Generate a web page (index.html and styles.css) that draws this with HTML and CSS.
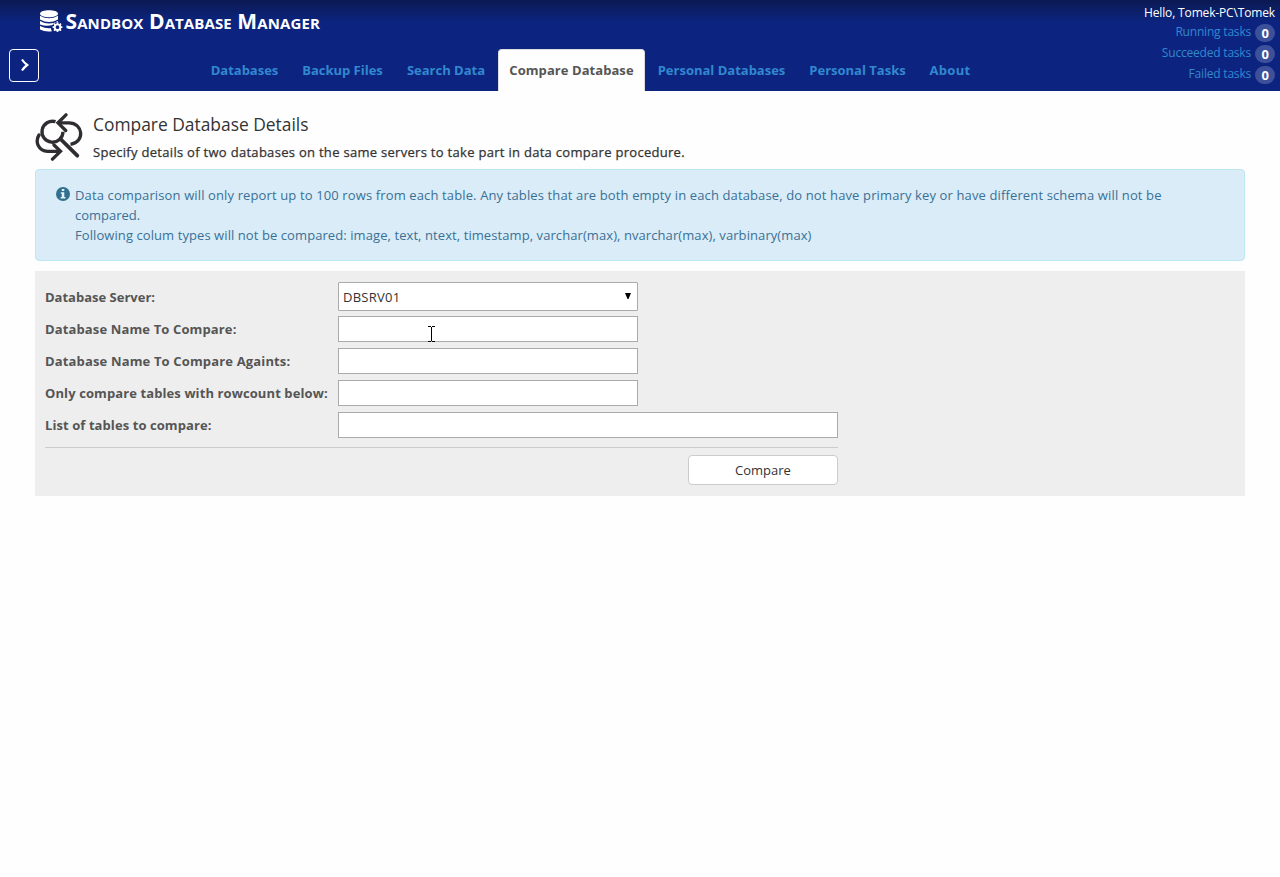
FILE: index.html
```html
<!DOCTYPE html>
<html lang="en">
<head>
<meta charset="utf-8">
<title>Sandbox Database Manager</title>
<link rel="stylesheet" href="styles.css">
</head>
<body>
<header class="header">
  <div class="left">
    <div class="brand">
      <svg class="logo" viewBox="0 0 23 23" width="23" height="23">
        <g fill="#fff">
          <path d="M0 3.700C0 -.9 18 -.9 18 3.700S0 8.300 0 3.700z"/>
          <path d="M0 5.800q9 5 18 0v3.600q-9 5-18 0z"/>
          <path d="M0 11q9 5 18 0v1q-4 0-5.500 3-6.500 1.500-12.500-.6z"/>
          <path d="M0 16q6 3 11 2.200 0 2 1 3-7 1-12-1.800z"/>
        </g>
        <circle cx="17.500" cy="17.200" r="2.800" fill="none" stroke="#fff" stroke-width="1.900"/>
        <path d="M17.500 14v-1.700M17.500 20.400v1.700M14.300 17.200h-1.700M20.700 17.200h1.700M15.300 15l-1.300-1.300M19.700 15l1.300-1.300M15.300 19.400l-1.300 1.300M19.700 19.400l1.300 1.300" stroke="#fff" stroke-width="1.700"/>
      </svg>
      <span class="brand-name">Sandbox Database Manager</span>
    </div>
    <div class="bar">
      <button class="expand" aria-label="Expand"><svg viewBox="0 0 10 14" width="10" height="14"><path d="M2 1.500Q4 4.600 7.200 7Q4 9.400 2 12.500" fill="none" stroke="#fff" stroke-width="2.200"/></svg></button>
      <nav class="tabs">
        <a class="tab t1"><span>Databases</span></a>
        <a class="tab t2"><span>Backup Files</span></a>
        <a class="tab t3"><span>Search Data</span></a>
        <a class="tab t4 active"><span>Compare Database</span></a>
        <a class="tab t5"><span>Personal Databases</span></a>
        <a class="tab t6"><span>Personal Tasks</span></a>
        <a class="tab t7"><span>About</span></a>
      </nav>
    </div>
  </div>
  <div class="status">
    <div class="hello">Hello, Tomek-PC\Tomek</div>
    <div class="task"><span>Running tasks</span><b class="badge">0</b></div>
    <div class="task"><span>Succeeded tasks</span><b class="badge">0</b></div>
    <div class="task"><span>Failed tasks</span><b class="badge">0</b></div>
  </div>
</header>
<main class="main">
  <div class="intro">
    <svg class="compare-icon" viewBox="0 0 48 48" width="48" height="48" fill="none" stroke="#302d32" stroke-width="3.300">
      <path d="M20.500 8.700A10.500 10.500 0 1 0 28 18.800"/>
      <path d="M25.500 26L42.300 42.700" stroke-width="3.800" stroke-linecap="round"/>
      <path d="M31 1.800L23 9.800L30.700 17.500" stroke-linecap="round"/>
      <path d="M23.500 9.800H34C48 9.800 50.500 29 35.500 31.300"/>
      <path d="M4 22C-.5 29 4 38.300 12.500 38.300H24.500" stroke-linecap="round"/>
      <path d="M19 32L25.500 38.300L17.500 46.200" stroke-linecap="round"/>
    </svg>
    <div>
      <h1 class="title"><span>Compare Database Details</span></h1>
      <p class="subtitle"><span>Specify details of two databases on the same servers to take part in data compare procedure.</span></p>
    </div>
  </div>
  <section class="notice">
    <svg class="info" viewBox="0 0 14 14" width="14" height="14"><circle cx="7" cy="7" r="7" fill="#31708f"/><path d="M5.800 2h2.500v2H5.800zM4.800 5.200h3.500v4.700h1.200v1.500H4.600V9.900h1.200V6.700h-1z" fill="#e4f2fa"/></svg>
    <div class="notice-text"><span class="n1">Data comparison will only report up to 100 rows from each table. Any tables that are both empty in each database, do not have primary key or have different schema will not be</span><br><span>compared.</span><br><span class="n3">Following colum types will not be compared: image, text, ntext, timestamp, varchar(max), nvarchar(max), varbinary(max)</span></div>
  </section>
  <section class="panel">
    <div class="form">
      <label class="l1"><span>Database Server:</span></label>
      <div class="field select"><span>DBSRV01</span><svg class="arrow" viewBox="0 0 6 6" width="6" height="6"><path d="M0 0h6L3.500 6h-1z" fill="#000"/></svg></div>
      <label class="l2"><span>Database Name To Compare:</span></label>
      <div class="field short"><svg class="cursor" viewBox="0 0 7 16" width="7" height="16"><path d="M0 .5h3M4 .5h3M3.500 1v14M0 15.500h3M4 15.500h3" stroke="#000"/></svg></div>
      <label class="l3"><span>Database Name To Compare Againts:</span></label>
      <div class="field short"></div>
      <label class="l4"><span>Only compare tables with rowcount below:</span></label>
      <div class="field short"></div>
      <label class="l5"><span>List of tables to compare:</span></label>
      <div class="field"></div>
    </div>
    <div class="actions"><button class="compare"><span>Compare</span></button></div>
  </section>
</main>
</body>
</html>
```
FILE: styles.css
```css
* { box-sizing: border-box; }
body { margin: 0; background: #fefefe; color: #333; font: 13px/20px "Open Sans", "Noto Sans", sans-serif; }
button { font: inherit; padding: 0; }
.header { height: 91px; display: flex; justify-content: space-between; background: linear-gradient(#0b1952, #0c247f 22px, #0c247f); }
.left { display: flex; flex-direction: column; justify-content: space-between; }
.brand { display: flex; padding: 10px 0 0 40px; height: 44px; color: #fff; }
.brand-name { margin: -4px 0 0 2.5px; font-size: 21px; line-height: 30px; font-weight: 700; font-variant: small-caps; white-space: nowrap; letter-spacing: .1px; }
.bar { display: flex; align-items: flex-end; padding-left: 9px; }
.expand { width: 30px; height: 33px; margin-bottom: 9px; border: 1px solid #fff; border-radius: 4px; background: none; display: flex; align-items: center; justify-content: center; padding: 0 0 2px 2px; }
.tabs { display: flex; margin-left: 161px; gap: 2px; }
.tab { height: 42px; border-radius: 4px 4px 0 0; display: flex; align-items: center; justify-content: center; font-weight: 700; color: #3288d0; white-space: nowrap; }
.active { background: #fefefe; color: #555; border: 1px solid #ddd; border-bottom: 0; padding-bottom: 1px; letter-spacing: .06px; }
.t1 { width: 89px; }
.t2 { width: 103px; }
.t3 { width: 100px; }
.t4 { width: 147px; }
.t5 { width: 149px; }
.t6 { width: 119px; }
.t7 { width: 62px; letter-spacing: .3px; }
.status { padding: 3px 5px 0 0; font-size: 12px; color: #3288d0; display: flex; flex-direction: column; align-items: flex-end; letter-spacing: -.15px; }
.hello { color: #fff; line-height: 20px; }
.task { height: 21px; display: flex; align-items: flex-start; gap: 4px; line-height: 18px; letter-spacing: -.2px; }
.badge { width: 20px; height: 18px; margin-top: 1px; border-radius: 9px; background: #3d509a; color: #fff; text-align: center; line-height: 18px; font-size: 13px; }
.main { padding: 20px 35px; }
.intro { height: 58px; display: flex; gap: 10px; }
.compare-icon { margin-top: 2px; }
.title { margin: 3px 0 0; font-size: 17.4px; line-height: 20px; font-weight: 400; }
.subtitle { margin: 8px 0 0; line-height: 20px; letter-spacing: .295px; -webkit-text-stroke: .25px #333; }
.notice { height: 92px; border: 1px solid #bce8f1; border-radius: 4px; background: #d9ecf8; color: #3b7095; display: flex; padding: 15px 20px; gap: 5px; }
.info { margin-top: 2px; flex: none; }
.notice-text { white-space: nowrap; }
.n1 { letter-spacing: .127px; }
.n3 { letter-spacing: .08px; }
.panel { margin-top: 10px; height: 225px; background: #eee; padding: 10px; }
.form { width: 793px; display: grid; grid-template-columns: 293px 500px; grid-template-rows: repeat(5, 32px); align-items: center; height: 167px; border-bottom: 1px solid #ccc; }
label { font-weight: 700; color: #555; white-space: nowrap; }
.l2 { letter-spacing: .13px; }
.l3 { letter-spacing: .15px; }
.l4 { letter-spacing: .1px; }
.l5 { letter-spacing: .08px; }
.field { height: 26px; border: 1px solid #aaa; background: #fff; position: relative; }
.short { width: 300px; }
.select { width: 300px; height: 29px; margin-bottom: 1px; border-radius: 1px; padding: 0 6px 0 4px; display: flex; align-items: center; justify-content: space-between; letter-spacing: .25px; }
.arrow { margin-bottom: 2px; }
.cursor { position: absolute; left: 89px; top: 9px; }
.actions { width: 793px; display: flex; justify-content: flex-end; padding-top: 7px; }
.compare { width: 150px; height: 30px; border: 1px solid #ccc; border-radius: 4px; background: #fff; color: #333; }
```
